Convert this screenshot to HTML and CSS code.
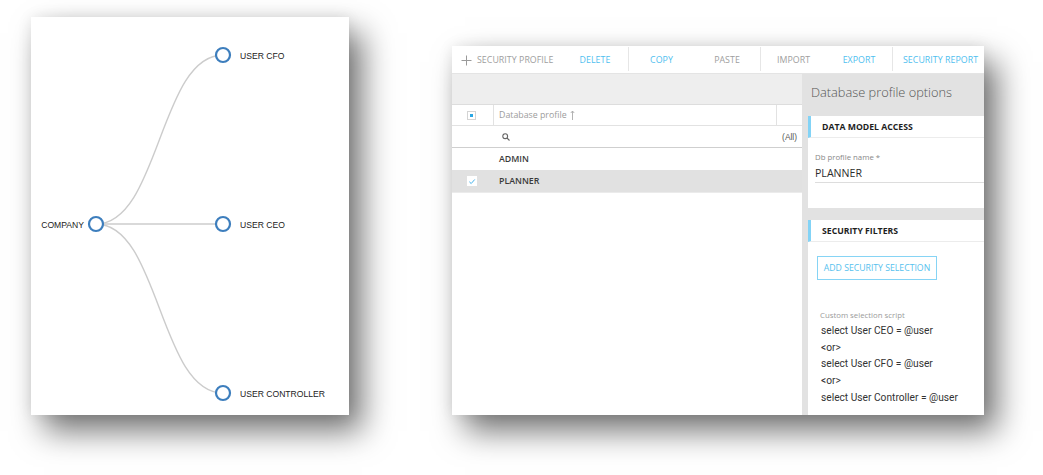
FILE: index.html
```html
<!DOCTYPE html>
<html>
<head>
<meta charset="utf-8">
<link rel="stylesheet" href="styles.css">
</head>
<body>
<div class="stage">
  <div class="card tree-card">
    <svg class="tree" width="318" height="398" viewBox="0 0 318 398">
      <g class="links">
        <path d="M65,207 C128.5,207 128.5,38 192,38"/>
        <path d="M65,207 L192,207"/>
        <path d="M65,207 C128.5,207 128.5,376 192,376"/>
      </g>
      <g class="nodes">
        <circle cx="65" cy="207" r="7"/>
        <circle cx="192" cy="38" r="7"/>
        <circle cx="192" cy="207" r="7"/>
        <circle cx="192" cy="376" r="7"/>
      </g>
      <g class="labels">
        <text x="53" y="210.5" text-anchor="end">COMPANY</text>
        <text x="209" y="41.5">USER CFO</text>
        <text x="209" y="210.5">USER CEO</text>
        <text x="209" y="379.5">USER CONTROLLER</text>
      </g>
    </svg>
  </div>

  <div class="card app">
    <div class="toolbar">
      <div class="tb first"><svg class="plus" width="11" height="11" viewBox="0 0 11 11"><path d="M5.5 0.5V10.5M0.5 5.5H10.5"/></svg><span class="off">SECURITY PROFILE</span></div>
      <div class="tb"><span class="on">DELETE</span></div>
      <div class="tb sep"><span class="on">COPY</span></div>
      <div class="tb"><span class="off">PASTE</span></div>
      <div class="tb sep"><span class="off">IMPORT</span></div>
      <div class="tb"><span class="on">EXPORT</span></div>
      <div class="tb sep last"><span class="on">SECURITY REPORT</span></div>
    </div>
    <div class="main">
      <div class="grid-pane">
        <div class="band"></div>
        <div class="grow head">
          <div class="c-check"><span class="box"><span class="dot"></span></span></div>
          <div class="c-name">Database profile <svg class="sort" width="5" height="10" viewBox="0 0 5 10"><path d="M2.5 1V10M0.8 3L2.5 1L4.2 3"/></svg></div>
          <div class="c-end"></div>
        </div>
        <div class="grow filter">
          <div class="c-check"></div>
          <div class="c-name"><svg class="search" width="8" height="8" viewBox="0 0 8 8"><circle cx="3.2" cy="3.2" r="2.4"/><path d="M5 5L7.5 7.5"/></svg></div>
          <div class="c-all">(All)</div>
        </div>
        <div class="grow item">
          <div class="c-check"></div>
          <div class="c-name">ADMIN</div>
        </div>
        <div class="grow item sel">
          <div class="c-check"><span class="box white"><svg width="9" height="9" viewBox="0 0 9 9"><path d="M1.5 4.8L3.6 6.8L7.6 2.2"/></svg></span></div>
          <div class="c-name">PLANNER</div>
        </div>
        <div class="grid-empty"></div>
      </div>
      <div class="options">
        <div class="opt-title">Database profile options</div>
        <div class="section">
          <div class="sec-head">DATA MODEL ACCESS</div>
          <div class="sec-body first-body">
            <div class="field-label">Db profile name *</div>
            <div class="field-value">PLANNER</div>
          </div>
        </div>
        <div class="section last-sec">
          <div class="sec-head">SECURITY FILTERS</div>
          <div class="sec-body">
            <div class="btn">ADD SECURITY SELECTION</div>
            <div class="script-label">Custom selection script</div>
            <div class="script">
              <div>select User CEO = @user</div>
              <div>&lt;or&gt;</div>
              <div>select User CFO = @user</div>
              <div>&lt;or&gt;</div>
              <div>select User Controller = @user</div>
            </div>
          </div>
        </div>
      </div>
    </div>
  </div>
</div>
</body>
</html>
```

FILE: styles.css
```css
html, body {
  margin: 0;
  padding: 0;
  background: #ffffff;
}
body {
  width: 1043px;
  height: 475px;
  overflow: hidden;
  font-family: "Open Sans", "Liberation Sans", sans-serif;
}
.stage {
  display: flex;
  align-items: flex-start;
  padding: 17px 0 0 31px;
  gap: 103px;
}
.card {
  background: #ffffff;
  box-shadow: 0 0 14px rgba(0,0,0,0.08), 13px 16px 30px rgba(0,0,0,0.55);
}
.tree-card {
  width: 318px;
  height: 398px;
}
.tree {
  display: block;
}
.links path {
  fill: none;
  stroke: #cccccc;
  stroke-width: 1.4;
}
.nodes circle {
  fill: #ffffff;
  stroke: #3d7ebd;
  stroke-width: 2.2;
}
.labels text {
  font-family: "Liberation Sans", Arial, sans-serif;
  font-size: 8.6px;
  fill: #222222;
}

/* app */
.app {
  margin-top: 29px;
  width: 532px;
  height: 369px;
  display: flex;
  flex-direction: column;
  overflow: hidden;
}
.toolbar {
  height: 27px;
  display: flex;
  border-bottom: 1px solid #e4e4e4;
  flex: none;
}
.tb {
  width: 66px;
  display: flex;
  align-items: center;
  justify-content: center;
  font-size: 8.8px;
  letter-spacing: 0.05px;
  box-sizing: border-box;
  padding-top: 1px;
}
.tb.first {
  width: 110px;
  justify-content: flex-start;
  padding-left: 9px;
}
.tb.sep {
  border-left: 1px solid #e6e6e6;
  margin: 1px 0 2px;
}
.tb.last {
  flex: 1;
  justify-content: flex-start;
  padding-left: 10px;
}
.plus {
  margin-right: 5px;
}
.plus path {
  stroke: #9a9a9a;
  stroke-width: 1;
  fill: none;
}
.off { color: #9e9e9e; }
.on { color: #4fc0ef; }

.main {
  flex: 1;
  display: flex;
  min-height: 0;
}
.grid-pane {
  width: 350px;
  display: flex;
  flex-direction: column;
  flex: none;
}
.band {
  height: 30px;
  background: #eeeeee;
}
.grow {
  display: flex;
  height: 22px;
  box-sizing: border-box;
  align-items: stretch;
}
.grow.head {
  border-top: 1px solid #dddddd;
  border-bottom: 1px solid #e2e2e2;
}
.grow.filter {
  border-bottom: 1px solid #cfcfcf;
}
.c-check {
  width: 42px;
  flex: none;
  display: flex;
  align-items: center;
  justify-content: center;
  box-sizing: border-box;
}
.head .c-check {
  border-right: 1px solid #e2e2e2;
}
.c-name {
  flex: 1;
  display: flex;
  align-items: center;
  padding-left: 5px;
  font-size: 8.6px;
}
.head .c-name {
  color: #9c9c9c;
  border-right: 1px solid #e2e2e2;
  font-size: 8.8px;
}
.c-end {
  width: 25px;
}
.sort {
  margin-left: 3px;
}
.sort path {
  stroke: #aaaaaa;
  stroke-width: 0.9;
  fill: none;
}
.search {
  margin-left: 3px;
}
.search circle, .search path {
  stroke: #666666;
  stroke-width: 1.1;
  fill: none;
}
.c-all {
  width: 30px;
  display: flex;
  align-items: center;
  justify-content: flex-end;
  padding-right: 5px;
  font-family: "Liberation Sans", Arial, sans-serif;
  font-size: 8.4px;
  color: #555555;
}
.box {
  width: 9px;
  height: 9px;
  border: 1px solid #d4d4d4;
  box-sizing: border-box;
  background: #ffffff;
  display: flex;
  align-items: center;
  justify-content: center;
  margin-left: -2px;
}
.dot {
  width: 3px;
  height: 3px;
  background: #2aa7e4;
}
.box.white {
  border-color: #ffffff;
  width: 10px;
  height: 10px;
}
.box svg path {
  stroke: #42b0ea;
  stroke-width: 1.1;
  fill: none;
}
.grow.item {
  height: 22px;
}
.item .c-name {
  font-weight: 600;
  color: #3a3a3a;
  font-size: 8.8px;
}
.grow.sel {
  background: #e1e1e1;
  height: 22px;
}
.grid-empty {
  flex: 1;
  border-top: 1px solid #ebebeb;
}

.options {
  flex: 1;
  background: #e2e2e2;
  padding-left: 6px;
  display: flex;
  flex-direction: column;
}
.opt-title {
  height: 42px;
  display: flex;
  align-items: center;
  padding-left: 3px;
  font-size: 12.8px;
  font-weight: 300;
  color: #555555;
  padding-bottom: 6px;
  box-sizing: border-box;
}
.section {
  background: #ffffff;
  margin-bottom: 12px;
}
.sec-head {
  height: 22px;
  border-left: 3px solid #83d3f6;
  border-bottom: 1px solid #ececec;
  display: flex;
  align-items: center;
  padding-left: 11px;
  font-size: 8.7px;
  font-weight: 700;
  color: #1e1e1e;
  box-sizing: border-box;
}
.sec-body {
  padding: 0 0 0 7px;
}
.first-body {
  height: 70px;
  padding-top: 13px;
  box-sizing: border-box;
}
.field-label {
  font-size: 7.8px;
  color: #888888;
  line-height: 12px;
}
.field-value {
  font-size: 10.6px;
  color: #2c2c2c;
  line-height: 18px;
  border-bottom: 1px solid #dddddd;
  padding-bottom: 0;
  margin-top: 1px;
}
.last-sec {
  flex: 1;
  margin-bottom: 0;
}
.btn {
  margin-top: 14px;
  margin-left: 2px;
  width: 120px;
  height: 24px;
  box-sizing: border-box;
  border: 1px solid #86d4f5;
  display: flex;
  align-items: center;
  justify-content: center;
  font-size: 8.7px;
  color: #56c1ee;
}
.script-label {
  margin-top: 30px;
  margin-left: 5px;
  font-size: 7.8px;
  color: #9a9a9a;
  line-height: 11px;
}
.script {
  margin-left: 6px;
  margin-top: 2px;
  font-family: Roboto, "Liberation Sans", sans-serif;
  font-size: 10.2px;
  color: #333333;
  line-height: 16.7px;
}
```
